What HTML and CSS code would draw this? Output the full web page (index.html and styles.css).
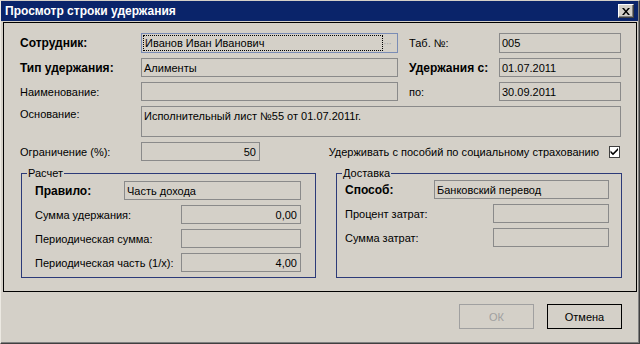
FILE: index.html
```html
<!DOCTYPE html>
<html lang="ru">
<head>
<meta charset="utf-8">
<title>Просмотр строки удержания</title>
<link rel="stylesheet" href="styles.css">
</head>
<body>
<div class="window">
  <div class="titlebar">
    <span class="title">Просмотр строки удержания</span>
    <span class="close-btn">
      <svg width="8" height="7" viewBox="0 0 8 7"><path d="M0 0h2l2 2.5L6 0h2L5 3.5 8 7H6L4 4.5 2 7H0l3-3.5z" fill="#000"/></svg>
    </span>
  </div>
  <div class="panel">
    <div class="topgrid">
      <div class="lbl bold">Сотрудник:</div>
      <div class="field focus"><span class="focus-rect">Иванов Иван Иванович</span><span class="dots">···</span></div>
      <div class="lbl lbl-r">Таб. №:</div>
      <div class="field">005</div>

      <div class="lbl bold">Тип удержания:</div>
      <div class="field">Алименты</div>
      <div class="lbl lbl-r bold">Удержания с:</div>
      <div class="field">01.07.2011</div>

      <div class="lbl">Наименование:</div>
      <div class="field"></div>
      <div class="lbl lbl-r">по:</div>
      <div class="field">30.09.2011</div>

      <div class="lbl lbl-top">Основание:</div>
      <div class="field area">Исполнительный лист №55 от 01.07.2011г.</div>

      <div class="lbl">Ограничение (%):</div>
      <div class="field num short">50</div>
      <div class="check-row">
        <span>Удерживать с пособий по социальному страхованию</span>
        <span class="checkbox">
          <svg width="9" height="9" viewBox="0 0 9 9"><path d="M0.5 3.5l2.5 2.5 5-5v2.2L3 8.2 0.5 5.7z" fill="#000"/></svg>
        </span>
      </div>
    </div>
    <div class="groups">
      <div class="group g1">
        <span class="legend">Расчет</span>
        <div class="grow"><span class="bold">Правило:</span><div class="field w177">Часть дохода</div></div>
        <div class="grow"><span>Сумма удержания:</span><div class="field num w120">0,00</div></div>
        <div class="grow"><span>Периодическая сумма:</span><div class="field num w120"></div></div>
        <div class="grow"><span>Периодическая часть (1/x):</span><div class="field num w120">4,00</div></div>
      </div>
      <div class="group g2">
        <span class="legend">Доставка</span>
        <div class="grow"><span class="bold">Способ:</span><div class="field w175">Банковский перевод</div></div>
        <div class="grow"><span>Процент затрат:</span><div class="field w116"></div></div>
        <div class="grow"><span>Сумма затрат:</span><div class="field w116"></div></div>
      </div>
    </div>
  </div>
  <div class="footer">
    <button class="btn disabled" type="button">ОК</button>
    <button class="btn default" type="button">Отмена</button>
  </div>
</div>
</body>
</html>
```
FILE: styles.css
```css
html, body {
  margin: 0;
  padding: 0;
  background: #d4d0c8;
}
body {
  font-family: "Liberation Sans", Arial, sans-serif;
  font-size: 11px;
  color: #000;
}
.window {
  width: 640px;
  height: 344px;
  box-sizing: border-box;
  background: #d4d0c8;
  border-top: 1px solid #d4d0c8;
  border-left: 1px solid #ece9e2;
  border-right: 1px solid #404040;
  border-bottom: 1px solid #404040;
  box-shadow: inset -1px -1px 0 #808080;
  display: flex;
  flex-direction: column;
}
.titlebar {
  height: 20px;
  background: #0a246a;
  display: flex;
  align-items: center;
  justify-content: space-between;
  padding: 0 4px 0 4px;
  margin-right: 1px;
}
.title {
  color: #fff;
  font-weight: bold;
  font-size: 12px;
}
.close-btn {
  width: 16px;
  height: 14px;
  box-sizing: border-box;
  background: #d4d0c8;
  border-top: 1px solid #fff;
  border-left: 1px solid #fff;
  border-right: 1px solid #404040;
  border-bottom: 1px solid #404040;
  box-shadow: inset -1px -1px 0 #808080;
  display: flex;
  align-items: center;
  justify-content: center;
}
.panel {
  margin: 1px 2px 0 2px;
  height: 270px;
  box-sizing: border-box;
  border: 1px solid #000;
  padding: 10px 0 0 16px;
}
.topgrid {
  display: grid;
  grid-template-columns: 121px 257px 101px 122px;
  grid-template-rows: 20px 19px 19px 31px 19px;
  row-gap: 5px;
}
.lbl {
  display: flex;
  align-items: center;
  white-space: nowrap;
}
.lbl-r {
  padding-left: 11px;
}
.lbl-top {
  align-items: flex-start;
  padding-top: 2px;
}
.bold {
  font-weight: bold;
  font-size: 12px;
}
.field {
  box-sizing: border-box;
  border: 1px solid #8a8a8a;
  background: #d4d0c8;
  display: flex;
  align-items: center;
  padding: 0 2px;
  white-space: nowrap;
  overflow: hidden;
}
.field.focus {
  border-color: #7a8cb5;
  padding: 1px;
  justify-content: space-between;
}
.focus-rect {
  width: 241px;
  height: 100%;
  box-sizing: border-box;
  border: 1px dotted #000;
  display: flex;
  align-items: center;
  padding-left: 1px;
}
.dots {
  color: #a8a8a8;
  padding-right: 5px;
  letter-spacing: -1px;
}
.field.area {
  grid-column: 2 / 5;
  align-items: flex-start;
  padding-top: 3px;
}
.field.num {
  justify-content: flex-end;
  padding-right: 3px;
}
.field.short {
  width: 119px;
}
.check-row {
  grid-column: 3 / 5;
  display: flex;
  align-items: center;
  justify-content: flex-end;
  white-space: nowrap;
  padding-right: 1px;
}
.checkbox {
  width: 12px;
  height: 12px;
  box-sizing: border-box;
  margin-left: 10px;
  background: #fff;
  border: 1px solid #404040;
  display: flex;
  align-items: center;
  justify-content: center;
}
.groups {
  display: flex;
  gap: 20px;
  margin-top: 12px;
  padding-left: 1px;
}
.group {
  position: relative;
  height: 105px;
  box-sizing: border-box;
  border: 1px solid #2c3a78;
  display: flex;
  flex-direction: column;
  gap: 5px;
  padding-top: 7px;
}
.g1 {
  width: 295px;
  padding-left: 13px;
  padding-right: 14px;
}
.g2 {
  width: 286px;
  padding-left: 8px;
  padding-right: 12px;
  padding-top: 6px;
}
.legend {
  position: absolute;
  top: -7px;
  left: 5px;
  background: #d4d0c8;
  padding: 0 1px;
  line-height: 13px;
}
.grow {
  display: flex;
  align-items: center;
  justify-content: space-between;
  height: 19px;
  white-space: nowrap;
}
.grow .field {
  height: 19px;
}
.w177 { width: 177px; }
.w175 { width: 175px; }
.w120 { width: 120px; }
.w116 { width: 116px; }
.footer {
  display: flex;
  justify-content: flex-end;
  gap: 13px;
  padding: 12px 17px 0 0;
}
.btn {
  width: 75px;
  height: 25px;
  box-sizing: border-box;
  font-family: "Liberation Sans", Arial, sans-serif;
  font-size: 11px;
  font-weight: normal;
  background: #d4d0c8;
  padding: 0;
  margin: 0;
}
.btn.disabled {
  border: 1px solid #a0a0a0;
  color: #a0a0a0;
}
.btn.default {
  border: 1px solid #000;
  color: #000;
}
```
